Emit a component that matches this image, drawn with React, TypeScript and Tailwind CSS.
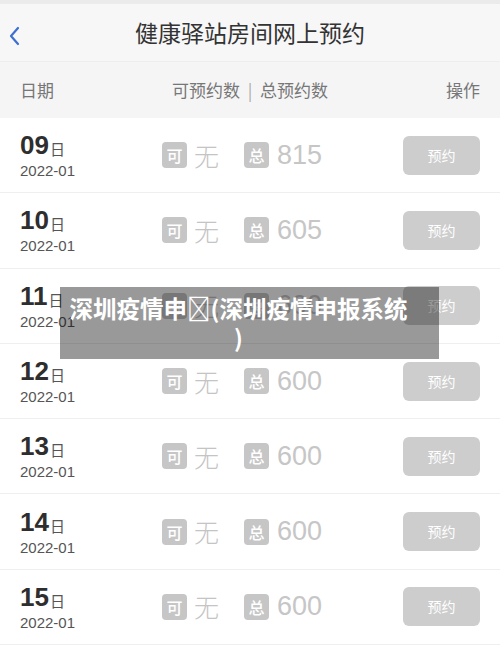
const rows = [
  { day: "09", total: "815" },
  { day: "10", total: "605" },
  { day: "11", total: "600" },
  { day: "12", total: "600" },
  { day: "13", total: "600" },
  { day: "14", total: "600" },
  { day: "15", total: "600" },
];

const cjk = { fontFamily: '"Noto Sans CJK SC", "Noto Sans", sans-serif' };
const num = { fontFamily: '"Liberation Sans", "Noto Sans CJK SC", sans-serif' };

const Badge = ({ label }: { label: string }) => (
  <span className="flex h-[26px] w-[25px] items-center justify-center rounded-[4px] bg-[#c6c6c6] text-[16px] font-medium leading-none text-white">
    {label}
  </span>
);

const Row = ({ day, total }: { day: string; total: string }) => (
  <div className="box-border flex h-[75.3px] items-center border-b border-[#efefef] bg-white px-[20px]">
    <div className="w-[142px] text-[#333]" style={num}>
      <div className="flex items-end leading-none">
        <span className="text-[26px] font-bold text-[#2e2e2e]">{day}</span>
        <span className="mb-[2px] ml-[1px] text-[15px] text-[#555]" style={cjk}>
          日
        </span>
      </div>
      <div className="mt-[5px] text-[15px] leading-none text-[#555]">2022-01</div>
    </div>
    <div className="flex items-center" style={cjk}>
      <Badge label="可" />
      <span className="ml-[7px] text-[25px] font-light leading-none text-[#c4c4c4]">无</span>
      <span className="ml-[25px]">
        <Badge label="总" />
      </span>
      <span className="ml-[8px] text-[27px] leading-none text-[#c6c6c6]" style={num}>
        {total}
      </span>
    </div>
    <button
      className="ml-auto h-[39px] w-[77px] rounded-[6px] bg-[#cdcdcd] text-[14px] text-white"
      style={cjk}
    >
      预约
    </button>
  </div>
);

export default function App() {
  return (
    <div className="relative h-[647px] w-[500px] overflow-hidden bg-white" style={cjk}>
      <div className="h-[4px] bg-[#ebebeb]" />
      <div className="relative flex h-[58px] items-center justify-center border-b border-[#eeeeee] bg-[#f7f7f7]">
        <svg className="absolute left-[8px] top-[22px]" width="12" height="20" viewBox="0 0 12 20">
          <path d="M10 2 L3 10 L10 18" fill="none" stroke="#3d6fd1" strokeWidth="2.2" strokeLinecap="round" strokeLinejoin="round" />
        </svg>
        <span className="text-[23px] text-[#333]">健康驿站房间网上预约</span>
      </div>
      <div className="flex h-[56px] items-center justify-between bg-[#f5f5f5] px-[20px] text-[17px] text-[#777]">
        <span>日期</span>
        <span>
          可预约数 <span className="mx-[4px] text-[#aaa]">|</span> 总预约数
        </span>
        <span>操作</span>
      </div>
      {rows.map((r) => (
        <Row key={r.day} day={r.day} total={r.total} />
      ))}
      <div className="absolute left-[60px] top-[287px] flex h-[72px] w-[379px] items-center justify-center bg-black/40 pr-[22px]">
        <div className="text-center text-[23.5px] font-bold leading-[29px] text-white">
          深圳疫情申{"\uE000"}(深圳疫情申报系统
          <br />)
        </div>
      </div>
    </div>
  );
}
